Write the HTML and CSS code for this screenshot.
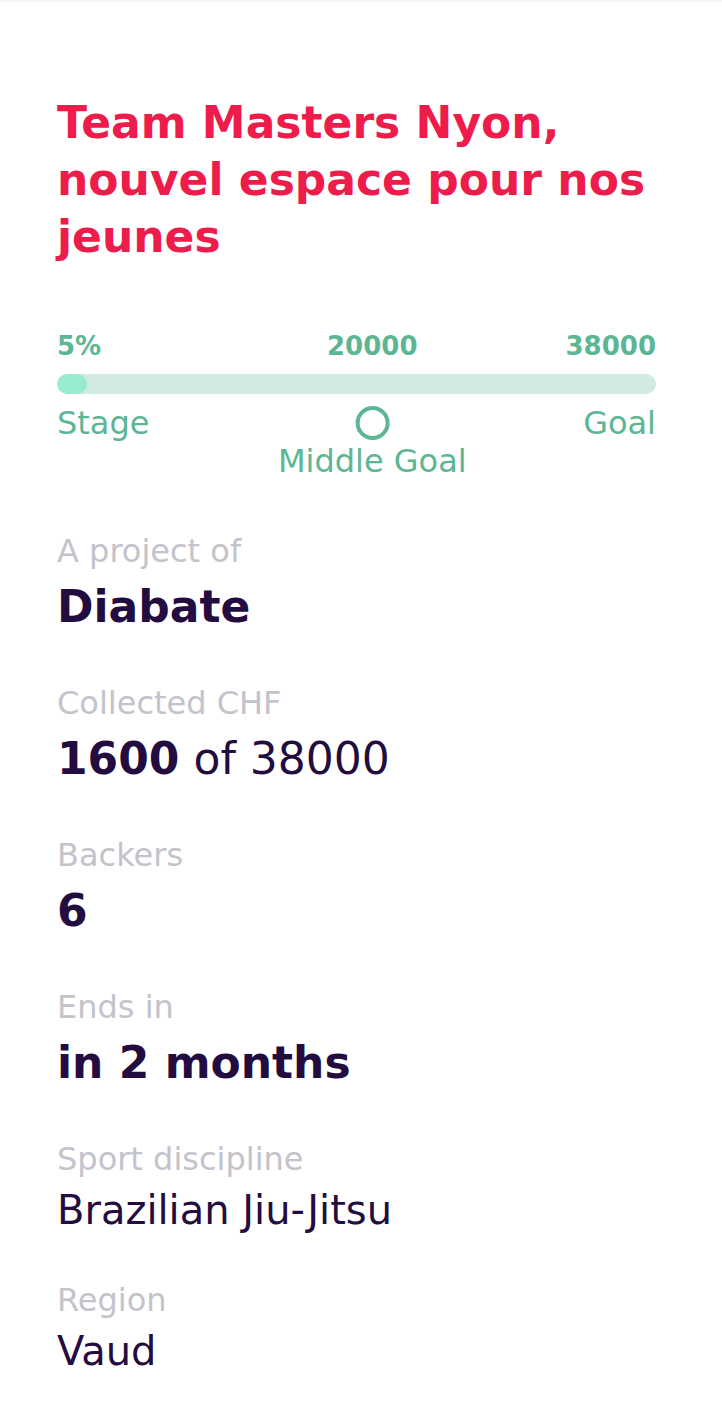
FILE: index.html
```html
<!DOCTYPE html>
<html lang="fr">
<head>
<meta charset="utf-8">
<title>Team Masters Nyon</title>
<link rel="stylesheet" href="styles.css">
</head>
<body>
<div class="topbar"></div>
<main class="project">
  <h1 class="title">Team Masters Nyon, nouvel espace pour nos jeunes</h1>

  <section class="progress">
    <div class="scale scale-top">
      <span>5%</span>
      <span>38000</span>
      <span class="mark" style="left:52.63%">20000</span>
    </div>
    <div class="bar"><div class="bar-fill" style="width:5%"></div></div>
    <div class="scale scale-bottom">
      <span class="end-label">Stage</span>
      <span class="end-label">Goal</span>
      <div class="mark mark-col" style="left:52.63%">
        <div class="dot-row"><span class="dot"></span></div>
        <span class="mark-label">Middle Goal</span>
      </div>
    </div>
  </section>

  <dl class="facts">
    <div class="fact">
      <dt>A project of</dt>
      <dd>Diabate</dd>
    </div>
    <div class="fact">
      <dt>Collected CHF</dt>
      <dd class="mixed"><strong>1600</strong> of 38000</dd>
    </div>
    <div class="fact">
      <dt>Backers</dt>
      <dd>6</dd>
    </div>
    <div class="fact">
      <dt>Ends in</dt>
      <dd>in 2 months</dd>
    </div>
    <div class="fact fact-tight">
      <dt>Sport discipline</dt>
      <dd class="plain">Brazilian Jiu-Jitsu</dd>
    </div>
    <div class="fact">
      <dt>Region</dt>
      <dd class="plain">Vaud</dd>
    </div>
  </dl>
</main>
</body>
</html>
```

FILE: styles.css
```css
* { box-sizing: border-box; }

html, body {
  margin: 0;
  padding: 0;
  background: #ffffff;
}

body {
  font-family: "DejaVu Sans", "Liberation Sans", sans-serif;
  color: #230d40;
}

.topbar {
  height: 2px;
  background: #f5f5f5;
}

.project {
  padding: 0 66px 0 57px;
}

.title {
  margin: 92px 0 0;
  font-size: 44px;
  line-height: 57px;
  font-weight: 700;
  color: #ee1c4a;
}

.progress {
  margin-top: 66px;
  color: #5db693;
}

.scale {
  position: relative;
  display: flex;
  justify-content: space-between;
}

.scale-top {
  font-size: 26px;
  line-height: 30px;
  font-weight: 700;
}

.mark {
  position: absolute;
  top: 0;
  transform: translateX(-50%);
  white-space: nowrap;
}

.bar {
  margin-top: 13px;
  height: 20px;
  border-radius: 10px;
  background: #d3eae1;
  overflow: hidden;
}

.bar-fill {
  height: 100%;
  border-radius: 10px;
  background: #96ebd0;
}

.scale-bottom {
  margin-top: 9px;
  height: 76px;
  font-size: 32px;
  line-height: 40px;
}

.mark-col {
  display: flex;
  flex-direction: column;
  align-items: center;
}

.dot-row {
  height: 40px;
  display: flex;
  align-items: center;
}

.dot {
  display: block;
  width: 34px;
  height: 34px;
  border: 4px solid #5db693;
  border-radius: 50%;
}

.mark-label {
  line-height: 36px;
}

.facts {
  margin: 52px 0 0;
}

.fact {
  margin-bottom: 50px;
}

.fact-tight {
  margin-bottom: 46px;
}

.fact dt {
  font-size: 32px;
  line-height: 40px;
  color: #c4c3cc;
}

.fact dd {
  margin: 10px 0 0;
  font-size: 44px;
  line-height: 52px;
  font-weight: 700;
  color: #230d40;
}

.fact dd.mixed {
  font-weight: 400;
}

.fact dd.mixed strong {
  font-weight: 700;
}

.fact dd.plain {
  margin-top: 7px;
  font-size: 40px;
  line-height: 48px;
  font-weight: 400;
}
```
